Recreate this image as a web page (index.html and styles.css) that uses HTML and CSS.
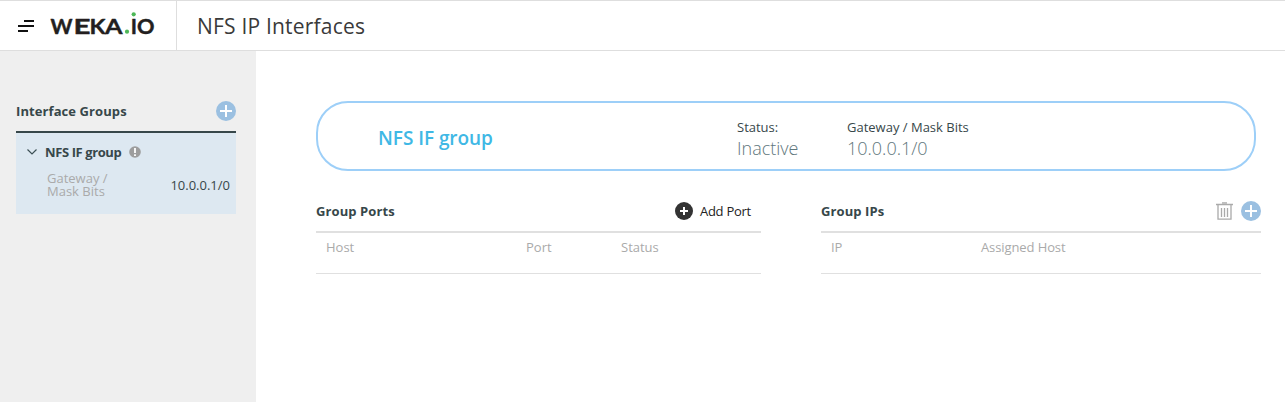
FILE: index.html
```
<!DOCTYPE html>
<html lang="en">
<head>
<meta charset="utf-8">
<title>NFS IP Interfaces</title>
<link rel="stylesheet" href="styles.css">
</head>
<body>
<header class="topbar">
  <div class="brand">
    <svg class="menu-icon" width="16" height="12" viewBox="0 0 16 12"><path d="M6 1H16M0 6H16M0 11H10" stroke="#111" stroke-width="2"/></svg>
    <svg class="logo" width="106" height="26" viewBox="0 0 106 26">
      <g class="logo-text"><text x="0.5" y="22.5" textLength="22" lengthAdjust="spacingAndGlyphs">W</text><text x="23.5" y="22.5" textLength="17" lengthAdjust="spacingAndGlyphs">E</text><text x="39.5" y="22.5" textLength="16" lengthAdjust="spacingAndGlyphs">K</text><text x="55" y="22.5" textLength="17.5" lengthAdjust="spacingAndGlyphs">A</text><text x="80.7" y="22.5">I</text><text x="87" y="22.5" textLength="17.5" lengthAdjust="spacingAndGlyphs">O</text></g>
      <circle cx="77" cy="20.7" r="2.1" fill="#4db857"/><circle cx="83.7" cy="3.3" r="2.1" fill="#4db857"/>
    </svg>
  </div>
  <h1 class="title">NFS IP Interfaces</h1>
</header>
<div class="body">
  <aside class="sidebar">
    <div class="side-head"><h2 class="heading">Interface Groups</h2>
      <svg width="20" height="20" viewBox="0 0 20 20"><circle cx="10" cy="10" r="10" fill="#9bc0e1"/><path d="M4 10H16M10 4V16" stroke="#fff" stroke-width="2"/></svg></div>
    <section class="group">
      <div class="group-name">
        <svg width="10" height="6" viewBox="0 0 10 6"><path d="M.5.5L5 5L9.5.5" fill="none" stroke="#3d5055" stroke-width="1.2"/></svg>
        <span>NFS IF group</span>
        <svg width="12" height="12" viewBox="0 0 12 12"><circle cx="6" cy="6" r="5.8" fill="#9d9d9d"/><path d="M6 2V7M6 8.2V10" stroke="#fff" stroke-width="1.8"/></svg>
      </div>
      <div class="group-info"><div class="label"><div>Gateway /</div><div>Mask Bits</div></div><span class="address">10.0.0.1/0</span></div>
    </section>
  </aside>
  <main class="main">
    <section class="summary">
      <div class="summary-name">NFS IF group</div>
      <div class="stat status"><b>Status:</b><span class="value">Inactive</span></div>
      <div class="stat"><b>Gateway / Mask Bits</b><span class="value">10.0.0.1/0</span></div>
    </section>
    <div class="tables">
      <section class="ports">
        <div class="table-head"><h2 class="heading">Group Ports</h2>
          <div class="add"><svg width="18" height="18" viewBox="0 0 18 18"><circle cx="9" cy="9" r="9" fill="#333"/><path d="M5 9H13M9 5V13" stroke="#fff" stroke-width="2"/></svg><span>Add Port</span></div></div>
        <div class="columns port-columns"><span>Host</span><span>Port</span><span>Status</span></div>
      </section>
      <section class="ips">
        <div class="table-head"><h2 class="heading">Group IPs</h2>
          <div class="actions"><svg width="17" height="18" viewBox="0 0 17 18"><path d="M0 2.5H17M6 .8H11" stroke="#aaa" stroke-width="1.3"/><path d="M2 3V17.2H15V3M5.5 6V15M8.5 6V15M11.5 6V15" fill="none" stroke="#aaa" stroke-width="1.3"/></svg>
          <svg width="20" height="20" viewBox="0 0 20 20"><circle cx="10" cy="10" r="10" fill="#9bc0e1"/><path d="M4 10H16M10 4V16" stroke="#fff" stroke-width="2"/></svg></div></div>
        <div class="columns ip-columns"><span>IP</span><span>Assigned Host</span></div>
      </section>
    </div>
  </main>
</div>
</body>
</html>
```

FILE: styles.css
```
* { box-sizing: border-box; }
body { margin: 0; height: 402px; overflow: hidden; background: #fff; color: #37474a; font: 13px/18px "Open Sans", "Noto Sans", sans-serif; display: flex; flex-direction: column; }
svg { display: block; flex: none; }
h1, h2 { margin: 0; }
.topbar { height: 51px; flex: none; display: flex; border: solid #dedede; border-width: 1px 0; }
.brand { width: 177px; border-right: 1px solid #dedede; display: flex; padding-left: 18px; }
.menu-icon { margin-top: 19px; }
.logo { margin: 10px 0 0 16px; }
.logo-text { font: 700 21px Lato, sans-serif; fill: #231f20; stroke: #231f20; stroke-width: .4px; stroke-linejoin: round; }
.title { font-size: 21px; font-weight: 400; line-height: 30px; letter-spacing: .2px; padding: 10px 0 0 20px; color: #3a3a3a; }
.body { flex: 1; display: flex; }
.sidebar { width: 256px; background: #efefef; padding: 40px 20px 0 16px; }
.side-head { height: 42px; display: flex; align-items: center; justify-content: space-between; border-bottom: 2px solid #37474a; }
.heading { font-size: 13px; line-height: 18px; font-weight: 700; letter-spacing: .09px; color: #37474a; }
.group { height: 81px; background: #dde8f1; padding: 9px 6px 0 11px; }
.group-name { display: flex; align-items: center; height: 20px; font-weight: 700; letter-spacing: -.4px; gap: 8px; }
.group-info { display: flex; justify-content: space-between; padding: 10px 0 0 20px; }
.label { color: #aaa; line-height: 13px; }
.address { padding-top: 4px; }
.main { flex: 1; padding: 50px 24px 0 60px; }
.summary { width: 940px; height: 70px; border: 2px solid #9dcff8; border-radius: 32px; display: flex; align-items: center; padding-left: 60px; }
.summary-name { width: 359px; font-size: 19px; font-weight: 600; letter-spacing: -.05px; color: #3fb8e5; line-height: 26px; padding-top: 3px; }
.stat { display: flex; flex-direction: column; align-items: flex-start; padding-top: 6px; }
.stat b { font-size: 13px; font-weight: 500; }
.status { width: 110px; }
.value { font-size: 18px; font-weight: 300; line-height: 24px; color: #5f777d; }
.tables { display: flex; gap: 60px; padding-top: 20px; }
.ports { width: 445px; }
.ips { width: 440px; }
.table-head { height: 42px; border-bottom: 2px solid #e0e0e0; display: flex; justify-content: space-between; align-items: center; }
.add { display: flex; align-items: center; gap: 7px; padding-right: 10px; letter-spacing: -.25px; color: #222; }
.actions { display: flex; align-items: center; gap: 8px; }
.columns { display: grid; height: 41px; border-bottom: 1px solid #e0e0e0; padding: 5px 0 0 10px; color: #aaa; }
.port-columns { grid-template-columns: 200px 95px 1fr; }
.ip-columns { grid-template-columns: 150px 1fr; letter-spacing: -.1px; }
```
